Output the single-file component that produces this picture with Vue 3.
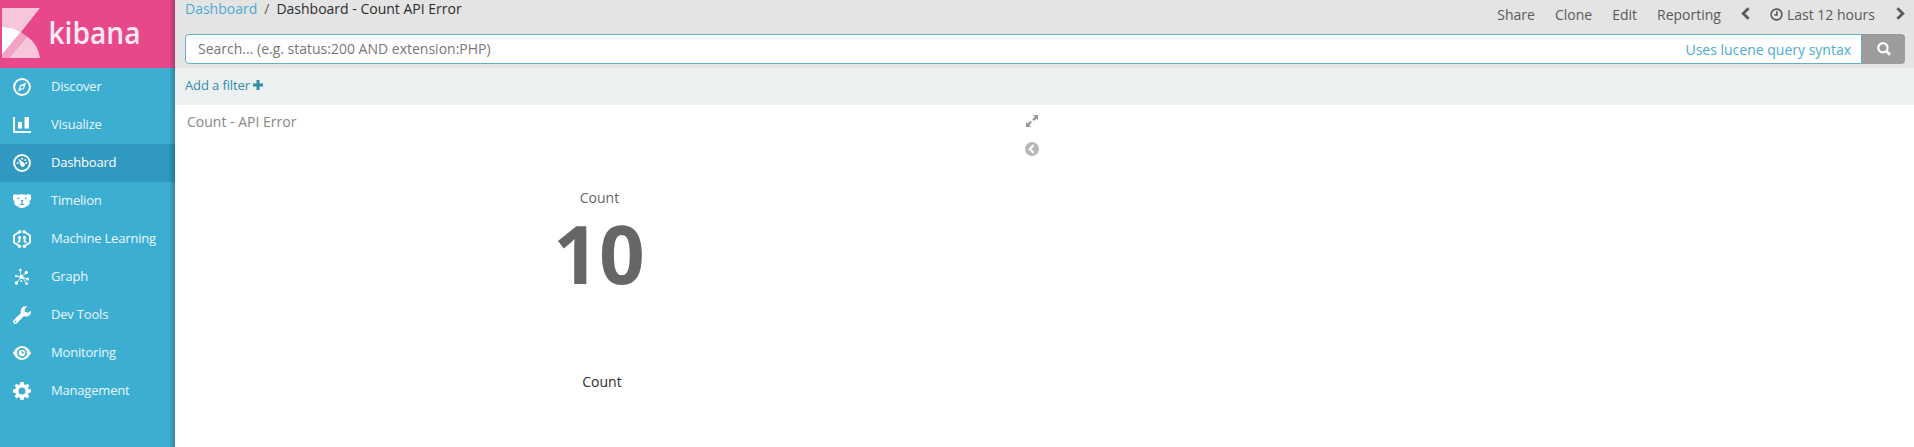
<script setup>
const links = ['Discover', 'Visualize', 'Dashboard', 'Timelion', 'Machine Learning', 'Graph', 'Dev Tools', 'Monitoring', 'Management']
const actions = ['Share', 'Clone', 'Edit', 'Reporting']
</script>

<template>
  <div class="app">
    <nav class="sidebar">
      <div class="logo">
        <svg width="175" height="68" viewBox="0 0 175 68">
          <path d="M2 8H40L21 32Q13 27 2 27Z" fill="#f8c6db" />
          <path d="M2 27Q13 27 21 32L2 55Z" fill="#fff" />
          <path d="M21 32L27 36.5L9 58H2V54.5Z" fill="#f3a1c4" />
          <path d="M27 36.5Q38 44 40 58H9Z" fill="#f8c6db" />
          <text class="wordmark" x="48.5" y="44" textLength="92" lengthAdjust="spacingAndGlyphs">kibana</text>
        </svg>
      </div>
      <a v-for="name in links" :key="name" class="link" :class="{ active: name === 'Dashboard' }">
        <svg class="icon" width="18" height="18" viewBox="0 0 18 18" fill="#fff">
          <template v-if="name === 'Discover'">
            <circle cx="9" cy="9" r="7.9" fill="none" stroke="#fff" stroke-width="2" />
            <path fill-rule="evenodd" d="M13 4.6L11 11L5 13.5L7 7.2ZM9 7.7A1.5 1.5 0 1 0 9 10.7A1.5 1.5 0 1 0 9 7.7Z" />
          </template>
          <path v-else-if="name === 'Visualize'" d="M0 1H2V15H18V17H0ZM5 6H9V12.5H5ZM11.5 1H16V12.5H11.5Z" />
          <template v-else-if="name === 'Dashboard'">
            <circle cx="9" cy="9" r="7.9" fill="none" stroke="#fff" stroke-width="2" />
            <path d="M5.2 4.6L10.6 8.4A2.3 2.3 0 1 1 7.4 11Z" />
            <circle cx="9.2" cy="4.8" r="1" /><circle cx="12.3" cy="6" r="1" /><circle cx="13.4" cy="9" r="1" /><circle cx="4.7" cy="9" r="1" />
          </template>
          <template v-else-if="name === 'Timelion'">
            <path d="M0 3Q2 1.5 5 2.8Q9 1.8 13 2.8Q16 1.5 18 3V7.5L16.6 9V12Q15 14 13 14.8Q9 17.2 5 14.8Q3 14 1.4 12V9L0 7.5Z" />
            <g fill="#3caed2"><circle cx="5.3" cy="6.3" r=".9" /><circle cx="12.7" cy="6.3" r=".9" /><path d="M7.4 8H10.6L9.5 9.7V11.3L11.6 13H6.4L8.5 11.3V9.7Z" /></g>
          </template>
          <template v-else-if="name === 'Machine Learning'">
            <g fill="none" stroke="#fff" stroke-width="1.8">
              <path d="M7 1.5L1 5.5V12.5L6 15.8M11 1.5L17 5.5V12.5L12 15.8M6.5 8V11.5L4.5 12.5M11.5 8V11.5L13.5 12.5" />
            </g>
            <circle cx="6.8" cy="1.7" r="1.7" /><circle cx="11.2" cy="1.7" r="1.7" /><circle cx="6.5" cy="7.4" r="1.6" /><circle cx="11.5" cy="7.4" r="1.6" /><circle cx="6.6" cy="16.2" r="1.7" /><circle cx="11.4" cy="16.2" r="1.7" />
          </template>
          <template v-else-if="name === 'Graph'">
            <path d="M8 8.8L7.3 2.5M8 8.8L13.3 5M8 8.8L3 8M8 8.8L3.5 15M8 8.8L14.5 11M9.5 9L13.5 15.7" fill="none" stroke="#fff" stroke-width=".9" />
            <circle cx="8.3" cy="9" r="2" /><circle cx="7.3" cy="2" r="1.3" /><circle cx="13.3" cy="4.5" r="1.7" /><circle cx="3.3" cy="8" r="1.3" /><circle cx="3.4" cy="15" r="1.7" /><circle cx="14.6" cy="11" r="1.5" /><circle cx="13.6" cy="15.7" r="1.4" /><circle cx="8.3" cy="13" r="1.1" />
          </template>
          <path v-else-if="name === 'Dev Tools'" fill-rule="evenodd" d="M14.2 .6L11.5 3.2L12.2 6L15 6.7L17.8 4.8Q18.5 9 15 10.3Q12.8 11 11 10L4 17.2Q2.2 18.6 .7 17.2Q-.6 15.6 .8 14L7.9 7Q7 4 9 1.7Q11.2-.5 14.2 .6ZM2.4 14.7A.9 .9 0 1 0 2.4 16.5A.9 .9 0 1 0 2.4 14.7Z" />
          <template v-else-if="name === 'Monitoring'">
            <path d="M0 9Q3.5 2 9 2T18 9Q14.5 16 9 16T0 9Z" />
            <circle cx="9" cy="9" r="4.1" fill="none" stroke="#3caed2" stroke-width="1.7" />
            <path d="M9 7A2 2 0 0 0 11 9" fill="none" stroke="#3caed2" stroke-width="1.1" />
          </template>
          <path v-else fill-rule="evenodd" d="M7.4 0H10.6L11.1 2.4L12.5 3L14.5 1.7L16.4 3.7L15 5.6L15.6 7L18 7.5V10.5L15.6 11L15 12.4L16.4 14.3L14.4 16.4L12.4 15L11.1 15.6L10.6 18H7.4L6.9 15.6L5.6 15L3.6 16.4L1.6 14.3L3 12.4L2.4 11L0 10.5V7.5L2.4 7L3 5.6L1.6 3.7L3.6 1.7L5.5 3L6.9 2.4ZM9 5.5A3.5 3.5 0 1 0 9 12.5A3.5 3.5 0 1 0 9 5.5Z" />
        </svg>
        <span>{{ name }}</span>
      </a>
    </nav>

    <main class="main">
      <header class="topbar">
        <div class="row">
          <div class="crumbs"><a>Dashboard</a><span class="slash">/</span><span class="current">Dashboard - Count API Error</span></div>
          <div class="menu">
            <span v-for="a in actions" :key="a" class="action">{{ a }}</span>
            <svg class="prev" width="9" height="13" viewBox="0 0 9 13"><path d="M7.6 1.2L2.2 6.5L7.6 11.8" /></svg>
            <svg class="clock" width="13" height="13" viewBox="0 0 13 13"><circle cx="6.5" cy="6.5" r="5.4" /><path d="M6.8 3.3V7H4.2" /></svg>
            <span class="range">Last 12 hours</span>
            <svg class="next" width="9" height="13" viewBox="0 0 9 13"><path d="M1.4 1.2L6.8 6.5L1.4 11.8" /></svg>
          </div>
        </div>
        <div class="search">
          <div class="field"><span>Search... (e.g. status:200 AND extension:PHP)</span><a>Uses lucene query syntax</a></div>
          <div class="go"><svg width="14" height="14" viewBox="0 0 14 14" fill="none" stroke="#fff"><circle cx="5.9" cy="5.8" r="4.6" stroke-width="2.2" /><path d="M9.2 9.1L13 12.8" stroke-width="2.8" /></svg></div>
        </div>
      </header>
      <div class="filters"><span>Add a filter</span><svg width="10" height="10" viewBox="0 0 10 10"><path d="M3.5 0H6.5V3.5H10V6.5H6.5V10H3.5V6.5H0V3.5H3.5Z" fill="#328caa" /></svg></div>
      <section class="panel">
        <div class="heading">
          <span>Count - API Error</span>
          <svg width="12" height="12" viewBox="0 0 12 12" fill="#999"><path d="M7 0H12V5L10.4 3.4L7.8 6L6.2 4.4L8.7 1.7ZM5 12H0V7L1.6 8.6L4.3 6L5.9 7.6L3.3 10.3Z" /></svg>
        </div>
        <div class="metric">
          <span class="label">Count</span>
          <strong>10</strong>
          <span class="title">Count</span>
          <svg class="collapse" width="14" height="14" viewBox="0 0 14 14"><circle cx="7" cy="7" r="7" fill="#b6b6b6" /><path d="M8.7 3L4.8 7L8.7 11" fill="none" stroke="#fff" stroke-width="2.1" /></svg>
        </div>
      </section>
    </main>
  </div>
</template>

<style>
body { margin: 0; overflow: hidden; background: #fff; }
</style>

<style scoped>
.app { display: flex; width: 1914px; height: 447px; overflow: hidden; font: 14px/20px "Open Sans", sans-serif; color: #2d2d2d; }
svg { display: block; flex: none; }
span, a { white-space: nowrap; }
.sidebar { position: relative; flex: none; width: 175px; background: #3caed2; }
.sidebar::after { content: ""; position: absolute; top: 0; right: 0; bottom: 0; width: 6px; background: linear-gradient(to right, transparent, rgba(0, 0, 0, .24)); }
.logo { height: 68px; background: #e8488b; }
.wordmark { font: 600 30px "Open Sans", sans-serif; fill: #fdeaf3; }
.link { display: flex; align-items: center; height: 38px; padding-left: 13px; font-size: 13px; letter-spacing: -.19px; color: #eaf6fa; }
.link span { margin: 0 0 3px 20px; }
.active { background: #2f99c1; color: #fff; }
.main { flex: 1; min-width: 0; }
.topbar { box-sizing: border-box; height: 68px; padding: 0 9px 0 10px; background: #e4e4e4; }
.row { display: flex; justify-content: space-between; height: 34px; }
.crumbs { display: flex; margin-top: -1px; }
.crumbs a { color: #4cabd3; }
.slash { margin: 0 7px 0 7px; color: #5a5a5a; }
.menu { display: flex; align-items: flex-start; padding-top: 5px; color: #5a5a5a; }
.action { margin-right: 20px; }
.menu svg { fill: none; stroke: #5a5a5a; stroke-width: 2.8; margin-top: 2px; }
.menu .clock { stroke-width: 1.6; margin: 3px 4px 0 20px; }
.menu .next { margin-left: 21px; }
.search { display: flex; height: 30px; }
.field { flex: 1; display: flex; justify-content: space-between; align-items: center; box-sizing: border-box; padding: 1px 10px 0 12px; border: 1px solid #62afc8; border-radius: 4px 0 0 4px; background: #fff; color: #777; }
.field span { margin-bottom: 1px; }
.field a { padding-top: 1px; color: #4cabd3; }
.go { display: flex; align-items: center; justify-content: center; width: 43px; border-radius: 0 4px 4px 0; background: #9c9c9c; }
.filters { display: flex; align-items: center; height: 37px; padding-left: 10px; background: #ecf0f1; font-size: 13px; letter-spacing: -.12px; color: #328caa; }
.filters span { margin: 0 3px 3px 0; }
.filters svg { margin-bottom: 3px; }
.panel { height: 342px; background: #fff; }
.heading { display: flex; align-items: center; justify-content: space-between; width: 851px; height: 32px; padding-left: 12px; color: #868686; }
.heading span { padding-top: 2px; }
.heading svg { margin-top: -1px; }
.metric { position: relative; display: flex; flex-direction: column; align-items: center; width: 849px; padding-top: 51px; }
.label { color: #666; }
.metric strong { margin: -5px 1px 0 0; font-size: 80px; font-weight: 700; line-height: 100px; color: #666; }
.title { margin: 69px 0 0 5px; }
.collapse { position: absolute; left: 850px; top: 5px; }
</style>
